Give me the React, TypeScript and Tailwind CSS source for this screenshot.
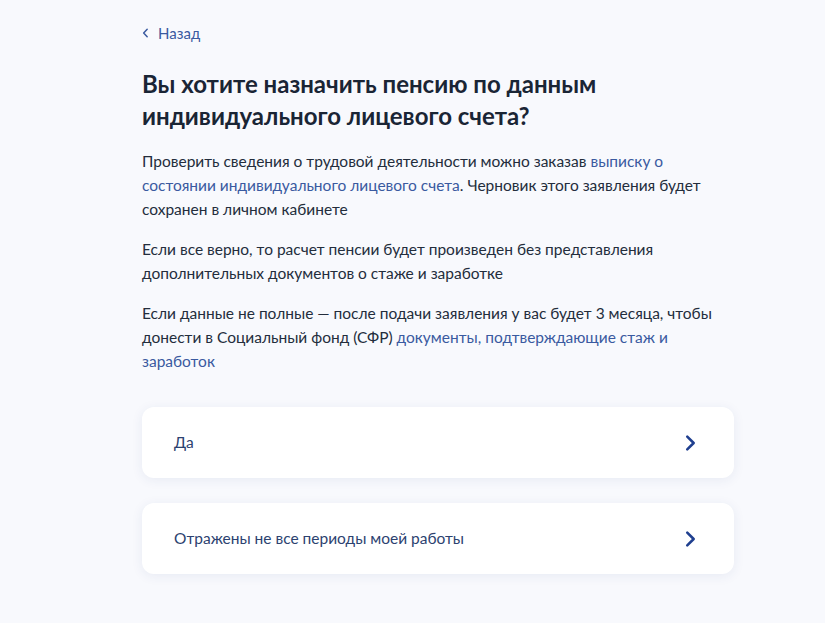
import React from "react";

const Chevron = ({ className }: { className?: string }) => (
  <svg viewBox="0 0 24 24" className={className} fill="none" stroke="currentColor" strokeWidth={2.8} strokeLinecap="round" strokeLinejoin="round">
    <path d="M9 5l7 7-7 7" />
  </svg>
);

const options = ["Да", "Отражены не все периоды моей работы"];

export default function App() {
  return (
    <div className="min-h-[623px] w-full bg-[#f8f9fd] font-['Lato','Liberation_Sans',sans-serif] text-[#0b1f33]">
      <div className="pl-[142px] pr-[91px] pt-[22px] pb-10">
        <a className="flex items-center gap-[9px] text-[15px] leading-[22px] text-[#3a5aa0]">
          <svg viewBox="0 0 8 12" className="h-[10px] w-[7px]" fill="none" stroke="currentColor" strokeWidth={1.8} strokeLinecap="round" strokeLinejoin="round">
            <path d="M6 1.5L1.8 6 6 10.5" />
          </svg>
          Назад
        </a>

        <h1 className="mt-[24px] text-[24px] leading-[32px] font-bold text-[#1a2535]">
          Вы хотите назначить пенсию по данным
          <br />
          индивидуального лицевого счета?
        </h1>

        <div className="mt-[17px] w-[660px] space-y-[16px] text-[15.5px] leading-[24px] text-[#232d3c]">
          <p>
            Проверить сведения о трудовой деятельности можно заказав <a className="text-[#3a5aa0]">выписку о</a>
            <br />
            <a className="text-[#3a5aa0]">состоянии индивидуального лицевого счета</a>. Черновик этого заявления будет
            <br />
            сохранен в личном кабинете
          </p>
          <p>
            Если все верно, то расчет пенсии будет произведен без представления
            <br />
            дополнительных документов о стаже и заработке
          </p>
          <p>
            Если данные не полные — после подачи заявления у вас будет 3 месяца, чтобы
            <br />
            донести в Социальный фонд (СФР) <a className="text-[#3a5aa0]">документы, подтверждающие стаж и</a>
            <br />
            <a className="text-[#3a5aa0]">заработок</a>
          </p>
        </div>

        <div className="mt-[34px] flex flex-col gap-[25px]">
          {options.map((o) => (
            <button
              key={o}
              className="flex h-[71px] w-full items-center justify-between rounded-[12px] bg-white pl-8 pr-[33px] text-left shadow-[0_2px_12px_rgba(40,70,130,0.08)]"
            >
              <span className="text-[15.5px] text-[#2c4270]">{o}</span>
              <Chevron className="h-[22px] w-[22px] text-[#1f3f8f]" />
            </button>
          ))}
        </div>
      </div>
    </div>
  );
}
